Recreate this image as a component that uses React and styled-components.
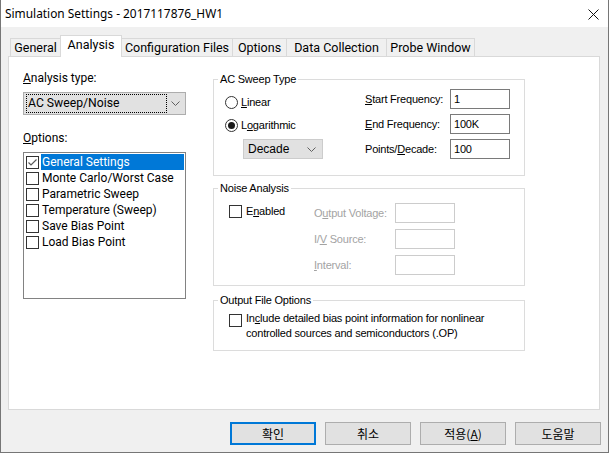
import React from 'react';
import styled, { createGlobalStyle } from 'styled-components';

const UI = 'Roboto, "Noto Sans", "Noto Sans CJK KR", sans-serif';
const OLD = '"Liberation Sans", Arial, sans-serif';

const GlobalStyle = createGlobalStyle`
    html, body {
        margin: 0;
        padding: 0;
        background: #ffffff;
    }
    * {
        box-sizing: border-box;
    }
`;

const TABS = [
    { name: 'General', w: 51 },
    { name: 'Analysis', w: 62, active: true },
    { name: 'Configuration Files', w: 112 },
    { name: 'Options', w: 55 },
    { name: 'Data Collection', w: 101 },
    { name: 'Probe Window', w: 89 },
];

const OPTIONS = [
    { label: 'General Settings', checked: true, selected: true },
    { label: 'Monte Carlo/Worst Case' },
    { label: 'Parametric Sweep' },
    { label: 'Temperature (Sweep)' },
    { label: 'Save Bias Point' },
    { label: 'Load Bias Point' },
];

const Chevron = () => (
    <svg width="9" height="5" viewBox="0 0 9 5">
        <polyline points="0.5,0.5 4.5,4.5 8.5,0.5" fill="none" stroke="#606060" strokeWidth="1" />
    </svg>
);

const CloseIcon = () => (
    <svg width="11" height="11" viewBox="0 0 11 11">
        <line x1="0.5" y1="0.5" x2="10.5" y2="10.5" stroke="#111" strokeWidth="1" />
        <line x1="10.5" y1="0.5" x2="0.5" y2="10.5" stroke="#111" strokeWidth="1" />
    </svg>
);

const Tick = ({ color }) => (
    <svg width="11" height="11" viewBox="0 0 11 11">
        <polyline points="1.5,5.5 4,8 9.5,2.5" fill="none" stroke={color} strokeWidth="1.2" />
    </svg>
);

const App = () => {
    return (
        <Window>
            <GlobalStyle />
            <TitleBar>
                <span>Simulation Settings - 2017117876_HW1</span>
                <CloseButton>
                    <CloseIcon />
                </CloseButton>
            </TitleBar>
            <Body>
                <TabStrip>
                    {TABS.map((t) => (
                        <Tab key={t.name} w={t.w} active={t.active}>
                            {t.name}
                        </Tab>
                    ))}
                </TabStrip>
                <Panel>
                    <LeftColumn>
                        <FieldLabel>
                            <u>A</u>nalysis type:
                        </FieldLabel>
                        <Combo>
                            <ComboFocus>AC Sweep/Noise</ComboFocus>
                            <ComboArrow>
                                <Chevron />
                            </ComboArrow>
                        </Combo>
                        <FieldLabel spaced>
                            <u>O</u>ptions:
                        </FieldLabel>
                        <ListBox>
                            {OPTIONS.map((o) => (
                                <ListItem key={o.label}>
                                    <Box>{o.checked && <Tick color="#5a5a5a" />}</Box>
                                    <ItemText selected={o.selected}>{o.label}</ItemText>
                                </ListItem>
                            ))}
                        </ListBox>
                    </LeftColumn>

                    <RightColumn>
                        <Group h={97} top={22}>
                            <Legend>AC Sweep Type</Legend>
                            <GroupRow pad={11}>
                                <SubColumn w={140} top={14}>
                                    <RadioRow>
                                        <Radio />
                                        <span>
                                            <u>L</u>inear
                                        </span>
                                    </RadioRow>
                                    <RadioRow gap={7}>
                                        <Radio checked />
                                        <span>
                                            L<u>o</u>garithmic
                                        </span>
                                    </RadioRow>
                                    <SmallCombo>
                                        <span>Decade</span>
                                        <Chevron />
                                    </SmallCombo>
                                </SubColumn>
                                <FormGrid label={85} top={9} gap={5}>
                                    <GridLabel>
                                        <u>S</u>tart Frequency:
                                    </GridLabel>
                                    <TextBox>1</TextBox>
                                    <GridLabel>
                                        <u>E</u>nd Frequency:
                                    </GridLabel>
                                    <TextBox>100K</TextBox>
                                    <GridLabel>
                                        Points/<u>D</u>ecade:
                                    </GridLabel>
                                    <TextBox>100</TextBox>
                                </FormGrid>
                            </GroupRow>
                        </Group>

                        <Group h={98} top={12}>
                            <Legend>Noise Analysis</Legend>
                            <GroupRow pad={15}>
                                <SubColumn w={85} top={14}>
                                    <CheckRow>
                                        <Box />
                                        <span>
                                            E<u>n</u>abled
                                        </span>
                                    </CheckRow>
                                </SubColumn>
                                <FormGrid label={81} top={14} gap={6}>
                                    <GridLabel disabled>
                                        O<u>u</u>tput Voltage:
                                    </GridLabel>
                                    <TextBox disabled />
                                    <GridLabel disabled>
                                        I/<u>V</u> Source:
                                    </GridLabel>
                                    <TextBox disabled />
                                    <GridLabel disabled>
                                        <u>I</u>nterval:
                                    </GridLabel>
                                    <TextBox disabled />
                                </FormGrid>
                            </GroupRow>
                        </Group>

                        <Group h={51} top={14}>
                            <Legend>Output File Options</Legend>
                            <GroupRow pad={15}>
                                <OutputCheck>
                                    <Box />
                                    <OutputText>
                                        In<u>c</u>lude detailed bias point information for nonlinear
                                        <br />
                                        controlled sources and semiconductors (.OP)
                                    </OutputText>
                                </OutputCheck>
                            </GroupRow>
                        </Group>
                    </RightColumn>
                </Panel>

                <ButtonRow>
                    <DialogButton primary>확인</DialogButton>
                    <DialogButton>취소</DialogButton>
                    <DialogButton>
                        적용(<u>A</u>)
                    </DialogButton>
                    <DialogButton>도움말</DialogButton>
                </ButtonRow>
            </Body>
        </Window>
    );
};

export default App;

const Window = styled.div`
    width: 609px;
    height: 453px;
    background: #f0f0f0;
    border: 1px solid #767676;
    border-top: none;
    display: flex;
    flex-direction: column;
    font-family: ${UI};
    color: #000;
`;

const TitleBar = styled.div`
    height: 27px;
    background: #ffffff;
    display: flex;
    align-items: center;
    justify-content: space-between;
    padding: 0 0 1px 4px;
    font-family: "Noto Sans", sans-serif;
    font-size: 11.9px;
`;

const CloseButton = styled.div`
    width: 30px;
    height: 27px;
    display: flex;
    align-items: center;
    justify-content: center;
    padding-top: 3px;
`;

const Body = styled.div`
    padding: 8px 8px 0 7px;
    display: flex;
    flex-direction: column;
`;

const TabStrip = styled.div`
    display: flex;
    align-items: flex-end;
    height: 22px;
    padding-left: 3px;
    position: relative;
    z-index: 1;
`;

const Tab = styled.div`
    width: ${({ w }) => w}px;
    height: ${({ active }) => (active ? 22 : 19)}px;
    margin-left: -1px;
    border: 1px solid #d9d9d9;
    border-bottom: ${({ active }) => (active ? 'none' : '1px solid #d9d9d9')};
    background: ${({ active }) => (active ? '#ffffff' : '#f0f0f0')};
    font-size: 12.5px;
    line-height: 16px;
    padding-top: 1px;
    text-align: center;
    white-space: nowrap;
    position: relative;
    z-index: ${({ active }) => (active ? 2 : 1)};
`;

const Panel = styled.div`
    margin-top: -1px;
    height: 354px;
    background: #ffffff;
    border: 1px solid #d9d9d9;
    display: grid;
    grid-template-columns: 163px 312px;
    column-gap: 27px;
    padding-left: 14px;
    align-items: start;
`;

const LeftColumn = styled.div`
    display: flex;
    flex-direction: column;
`;

const FieldLabel = styled.div`
    margin-top: ${({ spaced }) => (spaced ? 15 : 13)}px;
    font-size: 12px;
    line-height: 16px;
`;

const Combo = styled.div`
    margin-top: 6px;
    height: 23px;
    background: #e1e1e1;
    border: 1px solid #adadad;
    display: flex;
    align-items: center;
    padding: 0 2px;
`;

const ComboFocus = styled.div`
    width: 141px;
    height: 19px;
    border: 1px dotted #000;
    font-size: 12.2px;
    line-height: 17px;
    padding-left: 1px;
    white-space: nowrap;
`;

const ComboArrow = styled.div`
    flex: 1;
    display: flex;
    justify-content: center;
`;

const ListBox = styled.div`
    margin-top: 6px;
    height: 147px;
    border: 1px solid #828282;
    background: #fff;
    padding: 1px 1px 0 2px;
`;

const ListItem = styled.div`
    height: 16px;
    display: flex;
    align-items: center;
`;

const Box = styled.div`
    width: 13px;
    height: 13px;
    border: 1px solid #333;
    background: #fff;
    flex-shrink: 0;
    display: flex;
    align-items: center;
    justify-content: center;
`;

const ItemText = styled.div`
    flex: 1;
    margin-left: 2px;
    height: 16px;
    padding-left: 1px;
    font-size: 12px;
    line-height: 16px;
    white-space: nowrap;
    background: ${({ selected }) => (selected ? '#0078d7' : 'transparent')};
    color: ${({ selected }) => (selected ? '#ffffff' : '#000')};
`;

const RightColumn = styled.div`
    display: flex;
    flex-direction: column;
    font-family: ${OLD};
    font-size: 11px;
    letter-spacing: -0.2px;
`;

const Group = styled.div`
    margin-top: ${({ top }) => top}px;
    height: ${({ h }) => h}px;
    border: 1px solid #dcdcdc;
    position: relative;
`;

const Legend = styled.span`
    position: absolute;
    top: -8px;
    left: 4px;
    padding: 0 2px;
    background: #fff;
    line-height: 14px;
`;

const GroupRow = styled.div`
    display: flex;
    padding-left: ${({ pad }) => pad}px;
`;

const SubColumn = styled.div`
    width: ${({ w }) => w}px;
    padding-top: ${({ top }) => top}px;
    display: flex;
    flex-direction: column;
`;

const RadioRow = styled.div`
    display: flex;
    align-items: center;
    gap: 3px;
    height: 16px;
    margin-top: ${({ gap }) => gap || 0}px;
`;

const Radio = styled.div`
    width: 13px;
    height: 13px;
    border-radius: 50%;
    border: 1px solid #333;
    background: #fff;
    display: flex;
    align-items: center;
    justify-content: center;
    &::after {
        content: '';
        width: 7px;
        height: 7px;
        border-radius: 50%;
        background: ${({ checked }) => (checked ? '#1a1a1a' : 'transparent')};
    }
`;

const SmallCombo = styled.div`
    margin: 6px 0 0 18px;
    width: 80px;
    height: 20px;
    background: #e1e1e1;
    border: 1px solid #cccccc;
    display: flex;
    align-items: center;
    justify-content: space-between;
    padding: 0 6px 0 4px;
    font-size: 12px;
    letter-spacing: 0;
`;

const FormGrid = styled.div`
    padding-top: ${({ top }) => top}px;
    display: grid;
    grid-template-columns: ${({ label }) => label}px 60px;
    grid-auto-rows: 20px;
    row-gap: ${({ gap }) => gap}px;
    align-items: center;
`;

const GridLabel = styled.div`
    white-space: nowrap;
    color: ${({ disabled }) => (disabled ? '#a3a3a3' : '#000')};
`;

const TextBox = styled.div`
    height: 20px;
    border: 1px solid ${({ disabled }) => (disabled ? '#cccccc' : '#7a7a7a')};
    background: #fff;
    padding-left: 3px;
    line-height: 18px;
`;

const CheckRow = styled.div`
    display: flex;
    align-items: center;
    gap: 4px;
    height: 16px;
`;

const OutputCheck = styled.div`
    display: flex;
    align-items: flex-start;
    gap: 4px;
    padding-top: 10px;
    & > div:first-child {
        margin-top: 3px;
    }
`;

const OutputText = styled.div`
    line-height: 15px;
    white-space: nowrap;
`;

const ButtonRow = styled.div`
    margin-top: 12px;
    margin-right: -1px;
    display: flex;
    justify-content: flex-end;
    gap: 9px;
`;

const DialogButton = styled.div`
    width: 86px;
    height: 23px;
    background: #e1e1e1;
    border: ${({ primary }) => (primary ? '2px solid #0078d7' : '1px solid #adadad')};
    display: flex;
    align-items: center;
    justify-content: center;
    font-family: "Noto Sans CJK KR", "Noto Sans", sans-serif;
    font-size: 12px;
`;
